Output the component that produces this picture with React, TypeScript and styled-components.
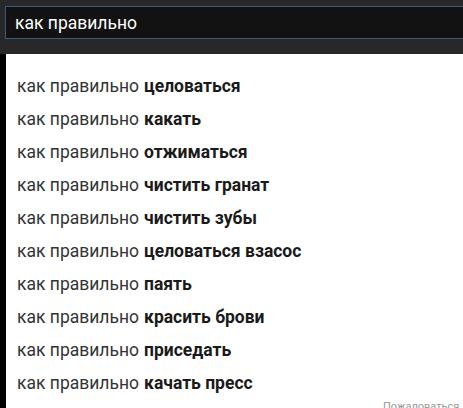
import styled, { createGlobalStyle } from 'styled-components';

const GlobalStyle = createGlobalStyle`
  html, body {
    margin: 0;
    padding: 0;
    background: #000;
    overflow: hidden;
  }
`;

const Page = styled.div`
  width: 463px;
  height: 408px;
  display: flex;
  flex-direction: column;
  font-family: Roboto, Arial, sans-serif;
  background: #000;
  overflow: hidden;
`;

const TopBar = styled.div`
  flex-shrink: 0;
  height: 54px;
  background: #282828;
  padding: 6px 0 0 5px;
  box-sizing: border-box;
`;

const SearchBox = styled.div`
  height: 33px;
  box-sizing: border-box;
  background: #121212;
  border: 1px solid #3a5b86;
  border-right: none;
  display: flex;
  align-items: center;
  padding-left: 9px;
  color: #fff;
  font-size: 17.5px;
`;

const Dropdown = styled.div`
  flex-shrink: 0;
  margin-left: 6px;
  background: #fff;
  padding-top: 15px;
  display: flex;
  flex-direction: column;
`;

const Item = styled.div`
  flex-shrink: 0;
  height: 33px;
  display: flex;
  align-items: center;
  padding-left: 11px;
  font-size: 17.5px;
  color: #333;
  white-space: nowrap;
`;

const Completion = styled.b`
  font-weight: 700;
  color: #1a1a1a;
  margin-left: 5px;
`;

const Footer = styled.div`
  flex-shrink: 0;
  display: flex;
  padding-left: 377px;
  margin-top: 1px;
  height: 20px;
  font-size: 11px;
  line-height: 13px;
  color: #999;
  white-space: nowrap;
  overflow: hidden;
`;

const query = 'как правильно';

const suggestions = [
  'целоваться',
  'какать',
  'отжиматься',
  'чистить гранат',
  'чистить зубы',
  'целоваться взасос',
  'паять',
  'красить брови',
  'приседать',
  'качать пресс',
];

export default function App() {
  return (
    <Page>
      <GlobalStyle />
      <TopBar>
        <SearchBox>{query}</SearchBox>
      </TopBar>
      <Dropdown>
        {suggestions.map((s) => (
          <Item key={s}>
            {query}
            <Completion>{s}</Completion>
          </Item>
        ))}
        <Footer>Пожаловаться</Footer>
      </Dropdown>
    </Page>
  );
}
